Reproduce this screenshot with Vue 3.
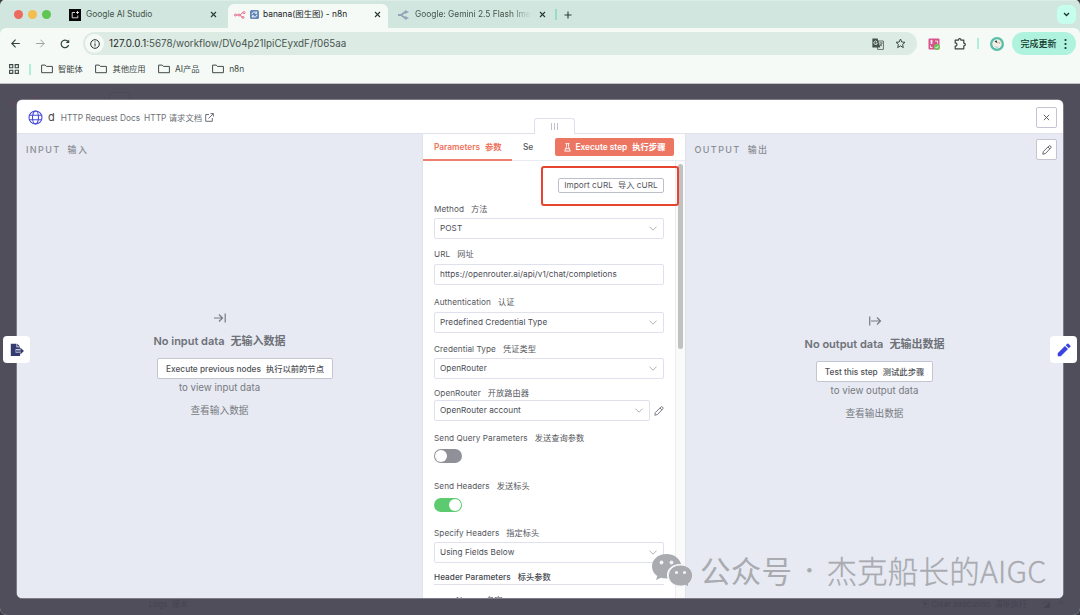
<script setup>
import { ref } from 'vue'

const bookmarks = ref(['智能体', '其他应用', 'AI产品', 'n8n'])

const fields = ref([
	{ id: 'method', label: 'Method', zh: '方法', value: 'POST', type: 'select' },
	{ id: 'url', label: 'URL', zh: '网址', value: 'https://openrouter.ai/api/v1/chat/completions', type: 'input' },
	{ id: 'auth', label: 'Authentication', zh: '认证', value: 'Predefined Credential Type', type: 'select' },
	{ id: 'cred', label: 'Credential Type', zh: '凭证类型', value: 'OpenRouter', type: 'select' },
	{ id: 'router', label: 'OpenRouter', zh: '开放路由器', value: 'OpenRouter account', type: 'select', edit: true },
	{ id: 'query', label: 'Send Query Parameters', zh: '发送查询参数', value: false, type: 'switch' },
	{ id: 'headers', label: 'Send Headers', zh: '发送标头', value: true, type: 'switch' },
	{ id: 'specify', label: 'Specify Headers', zh: '指定标头', value: 'Using Fields Below', type: 'select' }
])

const toggle = (field) => {
	field.value = !field.value
}
</script>

<template>
	<main class="window">

		<header class="tabs">
			<div class="lights"><i class="red"></i><i class="yellow"></i><i class="green"></i></div>

			<div class="tab first">
				<svg class="fav" width="12" height="12" viewBox="0 0 12 12"><rect width="12" height="12" fill="#050505" /><path d="M6 3.500H3.200v5.300h5.600V6.500M8.500 2v3M7 3.500h3" fill="none" stroke="#fff" stroke-width=".8" /></svg>
				<span>Google AI Studio</span>
				<svg class="x" width="7" height="7" viewBox="0 0 7 7"><path d="M1 1l5 5M6 1L1 6" /></svg>
			</div>

			<div class="tab active">
				<svg class="n8n" width="12" height="8" viewBox="0 0 12 8"><g fill="none" stroke="#e8698a" stroke-width="1"><circle cx="1.500" cy="4" r="1" /><circle cx="5" cy="4" r="1" /><circle cx="10" cy="1.600" r="1" /><circle cx="9" cy="6.400" r="1" /><path d="M2.500 4H4M6 4c1.500 0 1-2.400 3-2.400M6 4c1.500 0 .8 2.400 2 2.400" /></g></svg>
				<svg class="cycle" width="9" height="9" viewBox="0 0 9 9"><rect width="9" height="9" rx="1.500" fill="#6387b5" /><path d="M2 4.300A2.500 2.500 0 0 1 6.500 3M7 4.700A2.500 2.500 0 0 1 2.500 6M6.700 1.500v1.800H5M2.300 7.500V5.800H4" fill="none" stroke="#fff" stroke-width=".9" /></svg>
				<span>banana(图生图) - n8n</span>
				<svg class="x" width="7" height="7" viewBox="0 0 7 7"><path d="M1 1l5 5M6 1L1 6" /></svg>
			</div>

			<div class="tab third">
				<svg width="11" height="10" viewBox="0 0 11 10"><path d="M0 5h2.500C5 5 5 2 8 2M2.500 5C5 5 5 8 8 8" fill="none" stroke="#94a3b8" stroke-width="1.900" /><path d="M7 0l4 2-4 2zM7 6l4 2-4 2z" fill="#94a3b8" /></svg>
				<span class="fade">Google: Gemini 2.5 Flash Image</span>
				<svg class="x" width="7" height="7" viewBox="0 0 7 7"><path d="M1 1l5 5M6 1L1 6" /></svg>
			</div>

			<i class="sep"></i>
			<svg class="plus" width="8" height="8" viewBox="0 0 8 8"><path d="M4 .5v7M.5 4h7" stroke="#2c4038" stroke-width="1.100" /></svg>
			<button class="more"><svg width="7" height="5" viewBox="0 0 7 5"><path d="M1 1l2.500 2.500L6 1" fill="none" stroke="#16372a" stroke-width="1.300" /></svg></button>
		</header>

		<section class="chrome">
			<div class="toolbar">
				<svg class="back" width="9" height="9" viewBox="0 0 9 9"><path d="M8.800 4.500H1M4.600.7L.8 4.500l3.800 3.800" fill="none" stroke="#33443d" stroke-width="1.100" /></svg>
				<svg class="forward" width="9" height="9" viewBox="0 0 9 9"><path d="M.2 4.500H8M4.400.7l3.800 3.800-3.800 3.800" fill="none" stroke="#99a49f" stroke-width="1" /></svg>
				<svg class="reload" width="10" height="10" viewBox="0 0 10 10"><path d="M8.600 6A3.800 3.800 0 1 1 8 2.600L8.900 3.700" fill="none" stroke="#33443d" stroke-width="1.200" /><path d="M9.200.6v3.500H5.700z" fill="#33443d" /></svg>

				<div class="address">
					<div class="info"><svg width="10" height="10" viewBox="0 0 10 10"><circle cx="5" cy="5" r="4.300" fill="none" stroke="#24302b" stroke-width="1" /><path d="M5 4.400v3M5 2.400v1.100" stroke="#24302b" stroke-width="1" /></svg></div>
					<span class="link">127.0.0.1<em>:5678/workflow/DVo4p21IpiCEyxdF/f065aa</em></span>
					<svg class="translate" width="12" height="12" viewBox="0 0 12 12"><path d="M5 3h6.400v8.400H5.600z" fill="#e7efeb" stroke="#43514b" stroke-width=".8" /><path d="M.4.4h5.200l2.800 9H.4z" fill="#43514b" /><path d="M5 3.800A1.700 1.700 0 1 0 5.300 5H3.700" fill="none" stroke="#fff" stroke-width=".8" /><path d="M7.300 5h3.300M9 4v1M10 5c-.3 1.500-1 2.300-2.200 3.200M8.200 6c.5 1 1 1.600 2 2.200" fill="none" stroke="#43514b" stroke-width=".7" /></svg>
					<svg class="star" width="11" height="11" viewBox="0 0 11 11"><path d="M5.500 1l1.300 3 3.200.3-2.400 2.100.7 3.200-2.800-1.700-2.800 1.700.7-3.200L1 4.300 4.200 4z" fill="none" stroke="#3c4a44" stroke-width="1" /></svg>
				</div>

				<svg class="ext" width="12" height="12" viewBox="0 0 12 12"><rect x=".5" y=".5" width="11" height="11" rx="1" fill="#d6538c" /><path d="M2 3h3M3.500 1.800V6M2.200 5h2.600M7 3h2.500v2.500M2.500 7.500v2h2" fill="none" stroke="#fff" stroke-width=".8" /><circle cx="9" cy="9" r="3" fill="#6fc45b" /><path d="M7.500 9l1.100 1.100 1.900-2.200" fill="none" stroke="#fff" stroke-width=".9" /></svg>
				<svg class="puzzle" width="12" height="12" viewBox="0 0 12 12"><path d="M1.200 2.200h3.200c0-2 2.600-2 2.600 0h2.800v3c2 0 2 2.600 0 2.600v3H1.200V8.100c2.400 0 2.400-3.200 0-3.200z" fill="none" stroke="#35443e" stroke-width="1.200" stroke-linejoin="round" /></svg>
				<i class="sep"></i>
				<svg class="avatar" width="14" height="14" viewBox="0 0 14 14"><circle cx="7" cy="7" r="7" fill="#59bea6" /><circle cx="7" cy="7" r="4.700" fill="#f3eee9" /><path d="M4.500 4.500l2-1.200 1 2.900z" fill="#25343b" /><path d="M8 5l2.500.5-1 1.500z" fill="#e7a14d" /><path d="M4 9l5 1-2 1.500z" fill="#b7d6dd" /></svg>
				<button class="update">完成更新<svg width="3" height="12" viewBox="0 0 3 12"><g fill="#12382b"><circle cx="1.500" cy="2" r="1.100" /><circle cx="1.500" cy="6" r="1.100" /><circle cx="1.500" cy="10" r="1.100" /></g></svg></button>
			</div>

			<nav class="bookmarks">
				<svg width="10" height="10" viewBox="0 0 10 10"><path d="M.6.600h3.200v3.200H.6zM6.200.600h3.200v3.200H6.200zM.6 6.200h3.200v3.200H.6zM6.200 6.200h3.200v3.200H6.200z" fill="none" stroke="#3b4843" stroke-width="1.100" /></svg>
				<i class="sep"></i>
				<a v-for="item in bookmarks" :key="item">
					<svg width="12" height="10" viewBox="0 0 12 10"><path d="M.6 1.100h3.600l1.200 1.300h6v6.300H.6z" fill="none" stroke="#404c47" stroke-width="1" stroke-linejoin="round" /></svg>
					<span>{{ item }}</span>
				</a>
			</nav>
		</section>

		<section class="canvas">
			<svg class="ghost brand" width="120" height="16" viewBox="0 0 120 16"><g fill="none" stroke="#5d4a5a" stroke-width="1.200"><circle cx="3" cy="11" r="2.200" /><circle cx="25" cy="6" r="2.200" /><path d="M15 9c4 0 4-3 7.500-3" /></g><rect x="98.500" y=".5" width="20" height="15" rx="2" fill="none" stroke="#4c4957" /></svg>
			<span class="ghost logs">Logs&nbsp; 原木</span>
			<span class="ghost clear">▣ Clear execution&nbsp; 清晰执行</span>
			<span class="ghost corner">◪ &nbsp; ⌃</span>

			<div class="modal">
				<header class="title">
					<svg class="globe" width="15" height="15" viewBox="0 0 15 15"><g fill="none" stroke="#4549dc" stroke-width="1.100"><circle cx="7.500" cy="7.500" r="6.500" /><ellipse cx="7.500" cy="7.500" rx="3" ry="6.500" /><path d="M1.500 5.200h12M1.500 9.800h12" /></g></svg>
					<b>d</b>
					<span class="docs">HTTP Request Docs</span>
					<span class="docs zh">HTTP 请求文档</span>
					<svg class="open" width="9" height="9" viewBox="0 0 9 9"><path d="M4 1.500H.7v6.800h6.600V5M5.500.6h2.900v2.900M8.200.8L3.500 5.500" fill="none" stroke="#6c6f76" stroke-width="1" /></svg>
					<button class="square"><svg width="7" height="7" viewBox="0 0 7 7"><path d="M.8.800l5.400 5.400M6.200.8L.8 6.200" stroke="#555" stroke-width=".9" /></svg></button>
				</header>

				<div class="panels">
					<section class="side input">
						<h2>INPUT<span>输入</span></h2>
						<div class="empty">
							<svg class="arrow" width="12" height="10" viewBox="0 0 12 10"><path d="M0 5h8.500M5 1.500L8.500 5 5 8.500M11.200.5v9" fill="none" stroke="#777a80" stroke-width="1.200" /></svg>
							<h3>No input data<span>无输入数据</span></h3>
							<button>Execute previous nodes<span>执行以前的节点</span></button>
							<p>to view input data</p>
							<p class="zh">查看输入数据</p>
						</div>
					</section>

					<section class="params">
						<div class="drag"><i></i><i></i><i></i></div>
						<div class="param-tabs">
							<div class="current">Parameters<span>参数</span></div>
							<div class="settings">Se</div>
							<button>
								<svg width="7" height="9" viewBox="0 0 7 9"><path d="M1.500.6h4M2.500.6v3L.7 8.100h5.600L4.500 3.600v-3M1.800 5.700h3.400" fill="none" stroke="#fff" stroke-width=".9" /></svg>
								<b>Execute step</b><span>执行步骤</span>
							</button>
						</div>

						<div class="scroll">
							<form @submit.prevent>
								<button class="import">Import cURL<span>导入 cURL</span></button>

								<div v-for="field in fields" :key="field.id" class="field" :class="field.id">
									<label>{{ field.label }}<span>{{ field.zh }}</span></label>
									<div v-if="field.type === 'switch'" class="switch" :class="{ on: field.value }" @click="toggle(field)"><i></i></div>
									<div v-else class="row">
										<div class="control">
											{{ field.value }}
											<svg v-if="field.type === 'select'" width="8" height="5" viewBox="0 0 8 5"><path d="M.5.700L4 4.200 7.500.7" fill="none" stroke="#a6a9b0" stroke-width=".9" /></svg>
										</div>
										<svg v-if="field.edit" class="pencil" width="10" height="10" viewBox="0 0 10 10"><path d="M.8 9.200l.5-2.600L7 .9c1-.8 2.700.8 1.900 1.900L3.300 8.600zM6 2l1.900 1.900" fill="none" stroke="#6b6e76" stroke-width=".9" /></svg>
									</div>
								</div>

								<h4>Header Parameters<span>标头参数</span></h4>
								<div class="name">Name<span>名字</span></div>
							</form>
							<div class="track"><i></i></div>
						</div>
						<div class="highlight"></div>
					</section>

					<section class="side output">
						<h2>OUTPUT<span>输出</span></h2>
						<button class="square"><svg width="10" height="10" viewBox="0 0 10 10"><path d="M.8 9.200l.5-2.600L7 .9c1-.8 2.700.8 1.900 1.900L3.300 8.600zM6 2l1.900 1.900" fill="none" stroke="#555861" stroke-width=".9" /></svg></button>
						<div class="empty">
							<svg class="arrow" width="12" height="10" viewBox="0 0 12 10"><path d="M2 5h9.500M8 1.500L11.500 5 8 8.500M.7.500v9" fill="none" stroke="#777a80" stroke-width="1.200" /></svg>
							<h3>No output data<span>无输出数据</span></h3>
							<button>Test this step<span>测试此步骤</span></button>
							<p>to view output data</p>
							<p class="zh">查看输出数据</p>
						</div>
					</section>
				</div>
			</div>

			<div class="float left"><svg width="14" height="14" viewBox="0 0 14 14"><path d="M.8.700h5.700v3.600h3.600v2H5.500v3.200h4.600v3.600H.8zM7.200.7l2.900 2.900H7.200z" fill="#343b70" /><path d="M5.500 8h7M10.400 5.600L12.900 8l-2.500 2.400" fill="none" stroke="#343b70" stroke-width="1.400" /></svg></div>
			<div class="float right"><svg width="14" height="14" viewBox="0 0 14 14"><path d="M.7 10.200l7.200-7.200 3.100 3.100-7.200 7.200H.7zM8.700 2.200L10.200.700q.6-.5 1.200 0l1.900 1.900q.5.6 0 1.200l-1.500 1.500z" fill="#3a42e0" /></svg></div>

			<div class="watermark">
				<svg width="42" height="34" viewBox="0 0 42 34">
					<path d="M15.500 1C7 1 1 6.500 1 13.500c0 4 2 7.300 5.300 9.600L5 27l5-2.300c2 .6 4 .9 6.500.8C14 17 21 10.500 30 11 28.500 5 22.500 1 15.500 1z" fill="#a9abb0" />
					<path d="M29.500 12C22.500 12 17.500 16.500 17.500 22.500S22.500 33 29.500 33c1.700 0 3.200-.2 4.700-.7l4 2-.9-3.500c2.700-2 4.300-4.900 4.300-8.300C41.600 16.500 36.500 12 29.500 12z" fill="#a9abb0" stroke="#f0f2f6" stroke-width="1" />
					<g fill="#f0f2f6"><circle cx="10.500" cy="9.500" r="1.900" /><circle cx="20.500" cy="9.500" r="1.900" /><circle cx="25.500" cy="19.500" r="1.600" /><circle cx="33.500" cy="19.500" r="1.600" /></g>
				</svg>
				<span class="account">公众号</span><span class="dot">·</span><span class="owner">杰克船长的AIGC</span>
			</div>
		</section>

	</main>
</template>

<style>
body {
	margin: 0;
	background: #3a3a42;
	overflow: hidden;
}
</style>

<style scoped>
* {
	box-sizing: border-box;
}

.window {
	width: 1080px;
	height: 615px;
	display: flex;
	flex-direction: column;
	overflow: hidden;
	border-radius: 5px 5px 7px 7px;
	background: #d1e6de;
	font-family: Inter, "Noto Sans CJK SC", sans-serif;
	line-height: 14px;
	color: #55575d;
	white-space: nowrap;
}

svg {
	display: block;
	flex: none;
	overflow: visible;
}

button {
	font: inherit;
	letter-spacing: inherit;
	color: inherit;
	padding: 0;
	border: 0;
	display: flex;
	align-items: center;
	justify-content: center;
}

h2, h3, h4, p {
	margin: 0;
}

/* browser */

.tabs {
	height: 28px;
	display: flex;
	align-items: center;
	border-top: 1px solid #dcece6;
	font-size: 8.400px;
	color: #43534c;
}

.lights {
	display: flex;
	gap: 5px;
	margin-left: 14px;
	width: 55px;
}

.lights i {
	width: 9px;
	height: 9px;
	border-radius: 50%;
}

.red { background: #ed6a5e; }
.yellow { background: #f4bd4f; }
.green { background: #61c554; }

.tab {
	display: flex;
	align-items: center;
	height: 24px;
}

.tab .x {
	margin-left: auto;
	fill: none;
	stroke: #283a33;
	stroke-width: 1.100;
}

.first {
	width: 148px;
}

.first span {
	margin-left: 5px;
}

.tab span {
	margin-top: -1px;
}

.tab.active {
	align-self: flex-end;
	width: 160px;
	margin-left: 11px;
	padding: 0 7px 3px 6px;
	border-radius: 6px 6px 0 0;
	background: #f5faf7;
	color: #17231e;
}

.cycle {
	margin: 0 4px;
}

.third {
	width: 148px;
	margin-left: 10px;
}

.fade {
	width: 117px;
	margin-left: 6px;
	overflow: hidden;
	-webkit-mask-image: linear-gradient(90deg, #000 82%, transparent 99%);
	mask-image: linear-gradient(90deg, #000 82%, transparent 99%);
}

.sep {
	width: 1.500px;
	height: 11px;
	background: #aeeeda;
}

.tabs > .sep {
	margin: 0 7px 0 9px;
	background: #98dcc6;
}

.more {
	width: 19px;
	height: 19px;
	margin-left: auto;
	margin-right: 4px;
	border-radius: 6px;
	background: #c6ffed;
}

.chrome {
	height: 56px;
	border-radius: 6px 6px 0 0;
	border-bottom: 1px solid #bfc2c4;
	background: #f5faf7;
}

.toolbar {
	height: 31px;
	display: flex;
	align-items: center;
}

.back { margin-left: 11px; }
.forward { margin-left: 16px; }
.reload { margin-left: 15px; }

.address {
	width: 834px;
	height: 23px;
	margin-left: 13px;
	display: flex;
	align-items: center;
	border-radius: 12px;
	background: #ddebe5;
	color: #1e2923;
	font-size: 9.800px;
}

.address em {
	font-style: normal;
	color: #48554f;
}

.info {
	width: 19px;
	height: 19px;
	margin: 0 5px 0 2px;
	display: flex;
	align-items: center;
	justify-content: center;
	border-radius: 50%;
	background: #f5faf7;
}

.translate { margin-left: auto; }

.star { margin: 0 11px; }

.ext { margin-left: 11px; }
.puzzle { margin-left: 14px; }

.toolbar > .sep { margin-left: 11px; }
.avatar { margin-left: 11px; }

.update {
	width: 64px;
	height: 23px;
	margin-left: 8px;
	gap: 7px;
	border-radius: 12px;
	background: #aff3de;
	color: #12382b;
	font-size: 9px;
	font-weight: 500;
}

.bookmarks {
	height: 20px;
	display: flex;
	align-items: center;
	padding-left: 9px;
	font-size: 8.300px;
	color: #3c4843;
}

.bookmarks > .sep { margin: 0 10px 0 10px; }

.bookmarks a {
	display: flex;
	align-items: center;
	gap: 5.500px;
	margin-right: 12px;
}

/* editor */

.canvas {
	position: relative;
	height: 531px;
	padding: 16px 17px 0;
	background: #514e5c;
}

.ghost {
	position: absolute;
	top: 514px;
	font-size: 8px;
	line-height: 12px;
	color: #454350;
}

.brand {
	left: 11px;
	top: 8px;
}

.logs { left: 149px; }
.clear { left: 921px; }
.corner { left: 1043px; }

.modal {
	position: relative;
	width: 1046px;
	height: 498px;
	border-radius: 5px;
	overflow: hidden;
	background: #fff;
	box-shadow: 0 0 0 .5px #aaa8b3;
}

.title {
	height: 34px;
	display: flex;
	align-items: center;
	padding: 1px 6px 0 11px;
	border-bottom: 1px solid #dfe2ea;
}

.title b {
	margin: 0 6px 0 5px;
	font-size: 11px;
	font-weight: 400;
	color: #44464c;
}

.docs {
	padding-top: 2px;
	font-size: 8.350px;
	color: #6c6f76;
}

.docs.zh { margin: 0 3px 0 4px; }

.square {
	width: 21px;
	height: 21px;
	border: 1px solid #c3c6d2;
	border-radius: 2px;
	background: #fff;
}

.title .square { margin-left: auto; }

.panels {
	height: 465px;
	display: flex;
}

.side {
	position: relative;
	background: #e7eaf3;
	color: #777a80;
}

.input { width: 405px; }
.output { flex: 1; }

.side h2 {
	padding: 9px 0 0 9px;
	font-size: 9px;
	line-height: 14px;
	font-weight: 500;
	letter-spacing: 1.400px;
	color: #8b8d94;
}

.side h2 span { margin-left: 7px; }

.output .square {
	position: absolute;
	top: 5px;
	right: 6px;
}

.empty {
	display: flex;
	flex-direction: column;
	align-items: center;
	padding-top: 156px;
	font-size: 9.700px;
}

.output .empty { padding-top: 159px; }

.empty h3 {
	margin-top: 9px;
	font-size: 11px;
	line-height: 18px;
	font-weight: 600;
	color: #6e7177;
}

.empty h3 span { margin-left: 6px; }

.empty button {
	height: 21px;
	margin-top: 8px;
	padding: 0 8px;
	border: 1px solid #c3c6d2;
	border-radius: 2px;
	background: #fff;
	color: #505258;
	font-size: 8.300px;
	font-weight: 500;
}

.input .empty button { margin-left: 51px; }

.empty button span { margin-left: 5px; }

.empty p { line-height: 18px; }

.empty p.zh { margin-top: 5px; }

.params {
	position: relative;
	width: 264px;
	border: solid #dfe2ea;
	border-width: 0 1px;
	background: #fff;
}

.output h2 { padding-left: 8.500px; }

.drag {
	position: absolute;
	left: 111px;
	top: -16px;
	width: 41px;
	height: 16px;
	display: flex;
	justify-content: center;
	gap: 2px;
	padding-top: 4px;
	border: 1px solid #dfe2ea;
	border-bottom: 0;
	border-radius: 3px 3px 0 0;
	background: #fff;
}

.drag i {
	width: 1px;
	height: 7px;
	background: #bfc3cf;
}

.param-tabs {
	height: 27px;
	display: flex;
	border-bottom: 1px solid #e9ebf2;
	font-size: 8.300px;
	font-weight: 500;
	line-height: 26px;
}

.current {
	width: 89px;
	height: 27px;
	padding-left: 11px;
	border-bottom: 2px solid #ef8070;
	font-weight: 600;
	color: #ee7460;
}

.current span { margin-left: 5px; }

.settings { padding-left: 11px; }

.param-tabs button {
	width: 119px;
	height: 18px;
	margin: 4px 11px 0 auto;
	border-radius: 2px;
	background: #ed7663;
	color: #fff;
	font-weight: 600;
	line-height: 14px;
}

.param-tabs b {
	margin: 0 5px;
	font-weight: 600;
}

.scroll {
	height: 438px;
	display: flex;
	overflow: hidden;
}

form {
	width: 253px;
	padding: 17px 11px 0;
	font-size: 8.200px;
	line-height: 14px;
	letter-spacing: .06px;
}

.import {
	width: 106px;
	height: 15px;
	margin: 0 0 9px auto;
	padding-bottom: 1px;
	border: 1px solid #bcc0ca;
	border-radius: 2px;
	background: #fff;
}

.import span { margin-left: 5px; }

.field label {
	display: block;
}

.field label span,
h4 span,
.name span {
	margin-left: 7px;
}

.row {
	display: flex;
	align-items: center;
}

.control {
	flex: 1;
	height: 21px;
	display: flex;
	align-items: center;
	justify-content: space-between;
	padding: 0 6px 1px 5px;
	border: 1px solid #dfe2ec;
	border-radius: 2px;
	color: #4b4d54;
}

.pencil { margin-left: 4px; }

.method { height: 45px; }
.method .row { margin-top: 2px; }
.url { height: 48px; }
.url .row { margin-top: 3px; }
.auth { height: 47px; }
.auth .row { margin-top: 3px; }
.cred { height: 44px; }
.cred .row { margin-top: 2px; }
.router { height: 45px; }
.query { height: 48px; }
.query .switch { margin-top: 4px; }
.headers { height: 47px; }
.headers .switch { margin-top: 5px; }
.specify { height: 44px; }
.specify .row { margin-top: 2px; }

.switch {
	width: 28px;
	height: 14px;
	padding: 1px;
	display: flex;
	border-radius: 7px;
	background: #909198;
}

.switch i {
	width: 12px;
	height: 12px;
	border-radius: 50%;
	background: #fff;
}

.switch.on {
	justify-content: flex-end;
	background: #5ccb70;
}

h4 {
	height: 15px;
	border-bottom: 1px solid #dfe2ec;
	font-size: 8.200px;
	font-weight: 500;
	color: #44464c;
}

.name {
	margin: 8px 0 0 22px;
}

.track {
	width: 10px;
	padding: 3px 2px 0;
	border-left: 1px solid #ececf0;
	background: #fafafa;
}

.track i {
	display: block;
	width: 5px;
	height: 185px;
	border-radius: 3px;
	background: #c1c1c1;
}

.highlight {
	position: absolute;
	left: 118px;
	top: 32px;
	width: 138px;
	height: 40px;
	border: 2px solid #e5452f;
	border-radius: 3px;
}

.float {
	position: absolute;
	top: 252px;
	width: 27px;
	height: 27px;
	display: flex;
	align-items: center;
	justify-content: center;
	border-radius: 4px;
	background: #fff;
}

.left { left: 3px; }
.right { left: 1050px; }

.watermark {
	position: absolute;
	left: 651px;
	top: 468px;
	height: 36px;
	display: flex;
	align-items: center;
	color: #a9abb0;
	font-family: "Noto Sans CJK SC", sans-serif;
	font-size: 30.500px;
	line-height: 36px;
}

.watermark span {
	margin-top: -1px;
}

.watermark .account {
	margin-left: 7px;
	letter-spacing: .3px;
}

.watermark .dot {
	width: 34px;
	font-family: Inter, sans-serif;
	font-size: 34px;
	text-align: center;
}

.owner {
	font-weight: 300;
	letter-spacing: .2px;
	-webkit-text-stroke: .3px #a9abb0;
}
</style>
